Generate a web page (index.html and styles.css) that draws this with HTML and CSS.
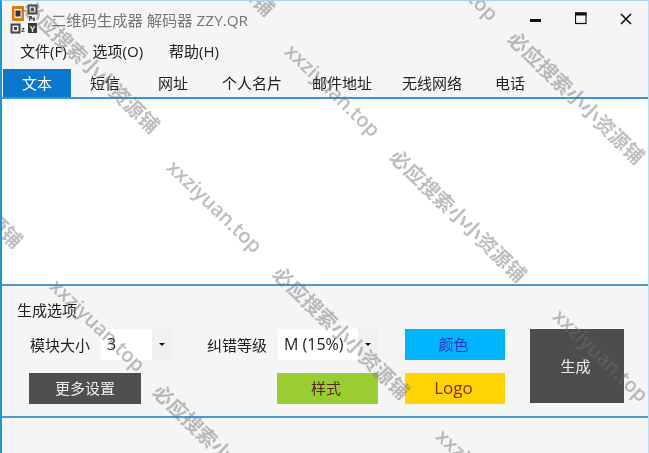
FILE: index.html

```html
<!DOCTYPE html>
<html lang="zh-CN">
<head>
  <meta charset="UTF-8">
  <title>二维码生成器 解码器 ZZY.QR</title>
  <link rel="stylesheet" href="styles.css">
</head>
<body>
  <div class="window">
    <div class="titlebar">
      <svg class="app-icon" width="28" height="30" viewBox="0 0 28 30">
        <rect x="2" y="2" width="12" height="15" fill="#e07b10"/>
        <rect x="4.5" y="5" width="7" height="9" fill="#f5f5f5"/>
        <rect x="5.5" y="6.5" width="5" height="6" fill="#333"/>
        <rect x="18.5" y="1.5" width="8" height="8" fill="none" stroke="#444" stroke-width="2"/>
        <rect x="21" y="4" width="3" height="3" fill="#444"/>
        <path d="M19 12h3v2h3v3h-2v-2h-3v2h-1z" fill="#555"/>
        <rect x="1.5" y="20.5" width="8" height="8" fill="none" stroke="#444" stroke-width="2"/>
        <rect x="4" y="23" width="3" height="3" fill="#444"/>
        <text x="11.2" y="28" class="icon-z">z</text>
        <rect x="18" y="19" width="9" height="10" fill="#3b3b3b"/>
        <text x="22.5" y="28" class="icon-y">Y</text>
      </svg>
      <span class="title">二维码生成器 解码器 ZZY.QR</span>
      <div class="controls">
        <svg width="12" height="12" viewBox="0 0 12 12"><rect x="0" y="6" width="11" height="3" fill="#111"/></svg>
        <svg width="12" height="13" viewBox="0 0 12 13"><rect x="0.5" y="1" width="10.5" height="10.5" fill="none" stroke="#111" stroke-width="1.2"/><rect x="0" y="0.5" width="11.5" height="3" fill="#111"/></svg>
        <svg width="12" height="12" viewBox="0 0 12 12"><path d="M1 1l10 10M11 1L1 11" stroke="#111" stroke-width="1.6" fill="none"/></svg>
      </div>
    </div>

    <div class="menubar">
      <span class="menu-item">文件(F)</span>
      <span class="menu-item">选项(O)</span>
      <span class="menu-item">帮助(H)</span>
    </div>

    <div class="tabs">
      <div class="tab active">文本</div>
      <div class="tab">短信</div>
      <div class="tab">网址</div>
      <div class="tab wide">个人名片</div>
      <div class="tab wide">邮件地址</div>
      <div class="tab wide">无线网络</div>
      <div class="tab last">电话</div>
    </div>

    <div class="input-area"></div>

    <div class="options">
      <div class="options-title">生成选项</div>
      <div class="options-grid">
        <div class="label size-label">模块大小</div>
        <div class="combo size-combo"><span class="combo-value">3</span><span class="combo-arrow"></span></div>
        <div class="label level-label">纠错等级</div>
        <div class="combo level-combo"><span class="combo-value">M (15%)</span><span class="combo-arrow"></span></div>
        <div class="btn color-btn">颜色</div>
        <div class="btn generate-btn">生成</div>
        <div class="btn more-btn">更多设置</div>
        <div class="btn style-btn">样式</div>
        <div class="btn logo-btn">Logo</div>
      </div>
    </div>

    <div class="result-area"></div>

    <div class="wm wm-latin wm-a1">xxziyuan.top</div>
    <div class="wm wm-latin wm-a2">xxziyuan.top</div>
    <div class="wm wm-latin wm-a3">xxziyuan.top</div>
    <div class="wm wm-latin wm-a4">xxziyuan.top</div>
    <div class="wm wm-latin wm-a5">xxziyuan.top</div>
    <div class="wm wm-latin wm-a6">xxziyuan.top</div>
    <div class="wm wm-b1">必应搜索小小资源铺</div>
    <div class="wm wm-b2">必应搜索小小资源铺</div>
    <div class="wm wm-b3">必应搜索小小资源铺</div>
    <div class="wm wm-b4">必应搜索小小资源铺</div>
    <div class="wm wm-b5">必应搜索小小资源铺</div>
    <div class="wm wm-b6">必应搜索小小资源铺</div>
    <div class="wm wm-b7">必应搜索小小资源铺</div>
  </div>
</body>
</html>
```

FILE: styles.css

```css
* {
  margin: 0;
  padding: 0;
  box-sizing: border-box;
}

html, body {
  height: 100%;
}

body {
  overflow: hidden;
  font-family: "Open Sans", "Noto Sans CJK SC", sans-serif;
  color: #222;
}

.window {
  position: relative;
  width: 649px;
  height: 453px;
  display: flex;
  flex-direction: column;
  overflow: hidden;
  background: #f5f5f5;
  border-top: 1px solid #a8d4ee;
  border-left: 2px solid #1a96da;
  border-right: 1px solid #bcdcf0;
  filter: blur(0.35px);
}

.titlebar {
  height: 35px;
  display: flex;
  align-items: center;
  padding-left: 8px;
}

.app-icon {
  flex: none;
}

.icon-z {
  font: bold 7px "Liberation Sans", sans-serif;
  fill: #333;
}

.icon-y {
  font: bold 9px "Liberation Sans", sans-serif;
  fill: #eee;
  text-anchor: middle;
}

.title {
  margin-left: 13px;
  font-size: 15.3px;
  color: #777;
  white-space: nowrap;
}

.controls {
  margin-left: auto;
  display: flex;
  align-items: center;
  gap: 33px;
  padding-right: 16px;
}

.controls svg {
  display: block;
}

.menubar {
  height: 33px;
  display: flex;
  align-items: center;
  gap: 26px;
  padding: 0 0 4px 18px;
  font-size: 15px;
}

.tabs {
  height: 30px;
  display: flex;
  border-bottom: 2px solid #3a96d6;
  padding-left: 1px;
  font-size: 15px;
}

.tab {
  padding: 0 19px;
  line-height: 28px;
  color: #222;
  white-space: nowrap;
}

.tab.wide {
  padding: 0 15px;
}

.tab.last {
  margin-left: -1px;
}

.tab.active {
  background: #0a78cc;
  color: #fff;
}

.input-area {
  height: 185px;
  background: #fff;
}

.options {
  height: 134px;
  padding: 14px 0 0 15px;
  border-top: 2px solid #4a9ad8;
  border-bottom: 2px solid #4a9ad8;
}

.options-title {
  font-size: 15px;
  line-height: 20px;
}

.options-grid {
  display: grid;
  grid-template-columns: 72px 40px 31px 35px 61px 10px 100px 27px 100px 25px 94px;
  grid-template-rows: 31px 31px;
  row-gap: 13px;
  margin: 9px 0 0 12px;
  font-size: 15px;
}

.label {
  align-self: center;
  white-space: nowrap;
  padding-bottom: 1px;
}

.size-label {
  grid-column: 1;
  grid-row: 1;
  padding-left: 1px;
}

.level-label {
  grid-column: 5;
  grid-row: 1;
}

.combo {
  display: flex;
  align-items: center;
  background: #fff;
  font-size: 16px;
}

.size-combo {
  grid-column: 2 / 4;
  grid-row: 1;
}

.level-combo {
  grid-column: 7;
  grid-row: 1;
}

.combo-value {
  flex: 1;
  padding: 0 0 1px 6px;
  white-space: nowrap;
}

.combo-arrow {
  width: 20px;
  align-self: stretch;
  flex: none;
  background: #f0f0f0;
  position: relative;
}

.combo-arrow::after {
  content: "";
  position: absolute;
  left: 7px;
  top: 14px;
  border-left: 3px solid transparent;
  border-right: 3px solid transparent;
  border-top: 3px solid #111;
}

.btn {
  display: flex;
  align-items: center;
  justify-content: center;
  padding-bottom: 2px;
  white-space: nowrap;
}

.color-btn {
  grid-column: 9;
  grid-row: 1;
  padding-right: 3px;
  background: #00b4ff;
  color: #2a34c4;
}

.generate-btn {
  grid-column: 11;
  grid-row: 1 / 3;
  padding-right: 3px;
  background: #4d4d4d;
  color: #eee;
  margin-bottom: 1px;
}

.more-btn {
  grid-column: 1 / 3;
  grid-row: 2;
  background: #4f4f4f;
  color: #eee;
}

.style-btn {
  grid-column: 7;
  grid-row: 2;
  margin-left: -1px;
  padding-right: 3px;
  background: #9acd32;
  color: #5a2a1a;
}

.logo-btn {
  grid-column: 9;
  grid-row: 2;
  background: #ffd400;
  color: #8a2a10;
  font-size: 17px;
  padding-right: 3px;
}

.result-area {
  flex: 1;
}

/* watermark over the whole shot */
.wm {
  position: absolute;
  transform: translate(-50%, -50%) rotate(44deg);
  font-size: 20px;
  font-weight: 700;
  color: rgba(110, 110, 110, 0.45);
  white-space: nowrap;
}

.wm-latin {
  font-weight: 600;
}

.wm-a1 { left: 213px; top: 205px; }
.wm-a2 { left: 331px; top: 89px; }
.wm-a3 { left: 449px; top: -27px; }
.wm-a4 { left: 96px; top: 324px; }
.wm-a5 { left: 599px; top: 354px; }
.wm-a6 { left: 482px; top: 474px; }
.wm-b1 { left: 457px; top: 214px; }
.wm-b2 { left: 575px; top: 96px; }
.wm-b3 { left: 340px; top: 331px; }
.wm-b4 { left: 220px; top: 449px; }
.wm-b5 { left: 90px; top: 65px; }
.wm-b6 { left: -47px; top: 180px; }
.wm-b7 { left: 205px; top: -52px; }
```
